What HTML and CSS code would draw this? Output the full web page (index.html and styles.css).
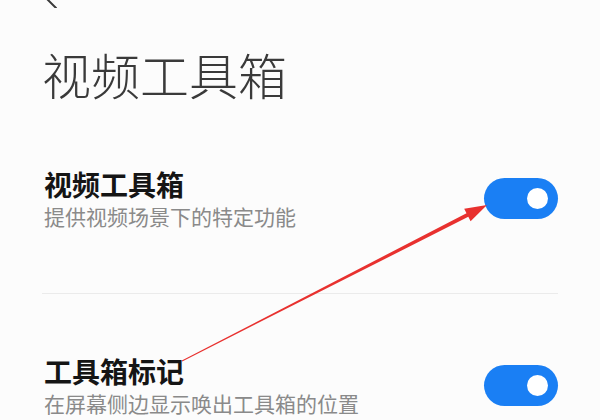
FILE: index.html
```html
<!DOCTYPE html>
<html lang="zh">
<head>
<meta charset="utf-8">
<link rel="stylesheet" href="styles.css">
</head>
<body>
<div class="page">
  <div class="topbar">
    <svg class="back" width="20" height="20" viewBox="0 0 20 20"><path d="M13 -4 L1 8 L13 20" fill="none" stroke="#3a3a3a" stroke-width="2" stroke-linecap="round" stroke-linejoin="round"/></svg>
  </div>
  <h1 class="title">视频工具箱</h1>
  <div class="row row-first">
    <div class="texts">
      <div class="label">视频工具箱</div>
      <div class="desc">提供视频场景下的特定功能</div>
    </div>
    <div class="toggle"><span class="knob"></span></div>
  </div>
  <div class="divider"></div>
  <div class="row row-second">
    <div class="texts">
      <div class="label">工具箱标记</div>
      <div class="desc">在屏幕侧边显示唤出工具箱的位置</div>
    </div>
    <div class="toggle"><span class="knob"></span></div>
  </div>
  <svg class="arrow" width="600" height="420" viewBox="0 0 600 420">
    <polygon points="181.8,372.6 466.5,225.2 464.2,220.8 487,217 470.6,233.2 468.3,228.8 182.2,373.4" fill="#e8312f"/>
  </svg>
</div>
</body>
</html>
```
FILE: styles.css
```css
html, body {
  margin: 0;
  padding: 0;
  background: #fcfcfc;
}
body {
  width: 600px;
  height: 420px;
  overflow: hidden;
  font-family: "Noto Sans CJK SC", "Noto Sans", sans-serif;
}
.page {
  position: relative;
  width: 600px;
  height: 420px;
  padding: 0 42px 0 44px;
  box-sizing: border-box;
}
.topbar {
  height: 8px;
  overflow: visible;
}
.back {
  display: block;
  margin-top: -12px;
  margin-left: -1px;
}
.title {
  margin: 53px 0 0 -2px;
  font-size: 49px;
  line-height: 1;
  font-weight: 300;
  color: #3a3a3a;
}
.row {
  display: flex;
  align-items: center;
  justify-content: space-between;
}
.row-first {
  margin-top: 72px;
}
.row-second {
  margin-top: 63px;
}
.texts {
  display: flex;
  flex-direction: column;
  gap: 8px;
}
.label {
  font-size: 28px;
  line-height: 1;
  font-weight: 700;
  color: #151515;
}
.desc {
  font-size: 21px;
  line-height: 1;
  color: #8a8a8a;
}
.toggle {
  width: 74px;
  height: 41px;
  border-radius: 21px;
  background: #1a7ff4;
  display: flex;
  align-items: center;
  justify-content: flex-end;
  padding-right: 10px;
  box-sizing: border-box;
}
.knob {
  width: 21px;
  height: 21px;
  border-radius: 50%;
  background: #ffffff;
}
.divider {
  height: 1px;
  background: #ebebeb;
  margin: 66px 0 0 -2px;
}
.arrow {
  position: absolute;
  left: 0;
  top: 0;
  pointer-events: none;
}
```
